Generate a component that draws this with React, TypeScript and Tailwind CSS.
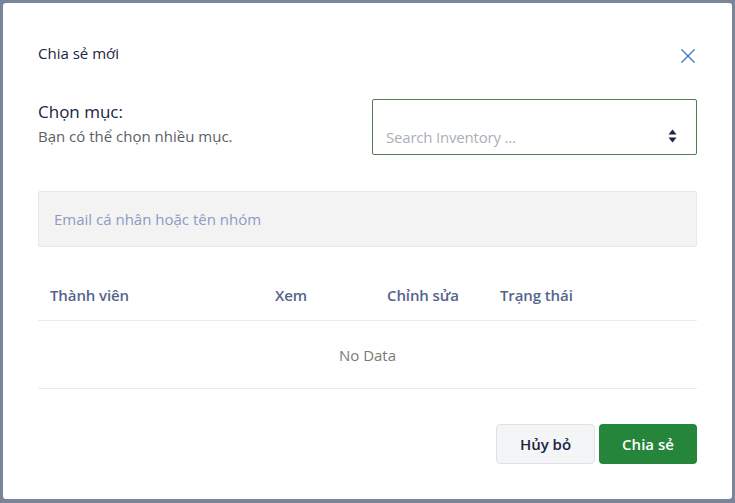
import React from "react";

const SortIcon = () => (
  <svg width="9" height="14" viewBox="0 0 9 14" fill="#1b2540">
    <path d="M4.5 0.5 L8.5 5.5 L0.5 5.5 Z" />
    <path d="M0.5 8.5 L8.5 8.5 L4.5 13.5 Z" />
  </svg>
);

const CloseIcon = () => (
  <svg width="16" height="16" viewBox="0 0 16 16" fill="none" stroke="#3b78d0" strokeWidth="1.4">
    <path d="M1.5 1.5 L14.5 14.5 M14.5 1.5 L1.5 14.5" />
  </svg>
);

const columns = ["Thành viên", "Xem", "Chỉnh sửa", "Trạng thái"];

export default function App() {
  return (
    <div
      className="w-[735px] h-[503px] bg-[#7b8599] p-[3px] overflow-hidden"
      style={{ fontFamily: '"Open Sans", "Noto Sans", sans-serif' }}
    >
      <div className="bg-white h-[496px] rounded-[3px] px-[35px] pt-[40px]">
        {/* header */}
        <div className="flex items-center justify-between h-[20px]">
          <h3 className="text-[15px] text-[#1a2540]">Chia sẻ mới</h3>
          <button className="mr-[1px] mt-[6px]">
            <CloseIcon />
          </button>
        </div>

        {/* chọn mục */}
        <div className="flex justify-between mt-[36px]">
          <div className="pt-[1px]">
            <p className="text-[17px] leading-[24px] text-[#1a2540]">Chọn mục:</p>
            <p className="text-[15px] leading-[20px] mt-[2px] text-[#5b5f66]">Bạn có thể chọn nhiều mục.</p>
          </div>
          <div className="w-[325px] h-[56px] border border-[#4d7f52] rounded-[2px] flex items-end justify-between pl-[13px] pr-[19px] pb-[6px]">
            <span className="text-[15px] text-[#aab0b8] tracking-[-0.2px]">Search Inventory ...</span>
            <span className="mb-[5px]">
              <SortIcon />
            </span>
          </div>
        </div>

        {/* email */}
        <div className="mt-[36px] h-[56px] bg-[#f3f3f4] border border-[#e6e8ee] rounded-[2px] flex items-center px-[15px]">
          <span className="text-[15px] text-[#8d9bc2]">Email cá nhân hoặc tên nhóm</span>
        </div>

        {/* table */}
        <div className="mt-[26px]">
          <div className="grid grid-cols-[225px_112px_113px_1fr] h-[48px] items-center border-b border-[#e9ebef]">
            {columns.map((c) => (
              <div key={c} className="px-[12px] pb-[2px] text-[15px] font-semibold text-[#55648c] tracking-[-0.1px]">
                {c}
              </div>
            ))}
          </div>
          <div className="h-[68px] flex items-center justify-center pt-[2px] border-b border-[#e9ebef] text-[15px] text-[#7a7a7a]">
            No Data
          </div>
        </div>

        {/* footer */}
        <div className="flex justify-end gap-[4px] mt-[35px]">
          <button className="w-[99px] h-[40px] rounded-[4px] bg-[#f4f5f7] border border-[#dfe1e6] text-[15px] font-semibold text-[#1a2540]">
            Hủy bỏ
          </button>
          <button className="w-[98px] h-[40px] rounded-[4px] bg-[#25853a] text-[15px] font-semibold text-white">
            Chia sẻ
          </button>
        </div>
      </div>
    </div>
  );
}
